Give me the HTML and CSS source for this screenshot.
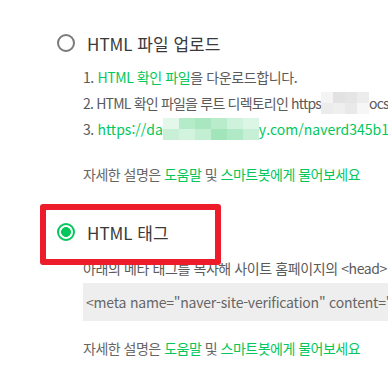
FILE: index.html
```html
<!DOCTYPE html>
<html lang="ko">
<head>
    <meta charset="UTF-8">
    <meta name="viewport" content="width=device-width, initial-scale=1.0">
    <title>사이트 소유확인</title>
    <link rel="stylesheet" href="styles.css">
</head>
<body>
    <div class="page">
        <div class="option">
            <span class="radio"></span>
            <span class="option-label">HTML 파일 업로드</span>
        </div>

        <ol class="steps">
            <li>1. <a class="link" href="#">HTML 확인 파일</a>을 다운로드합니다.</li>
            <li class="tight">2. HTML 확인 파일을 루트 디렉토리인 https<span class="mosaic grey"><i></i><i></i><i></i><i></i><i></i><i></i><i></i><i></i></span>ocs/</li>
            <li>3. <a class="link url" href="#">https://da<span class="mosaic green"><i></i><i></i><i></i><i></i><i></i><i></i><i></i><i></i><i></i><i></i><i></i><i></i></span>y.com/naverd345b19c.html</a></li>
        </ol>

        <p class="help">자세한 설명은 <a class="link" href="#">도움말</a> 및 <a class="link" href="#">스마트봇에게 물어보세요</a></p>

        <div class="option selected">
            <span class="radio on"></span>
            <span class="option-label">HTML 태그</span>
            <div class="highlight"></div>
        </div>

        <p class="desc">아래의 메타 태그를 복사해 사이트 홈페이지의 &lt;head&gt;섹션에 붙여넣어 주세요.</p>
        <div class="code">&lt;meta name="naver-site-verification" content="d345b19c" /&gt;</div>

        <p class="help help-last">자세한 설명은 <a class="link" href="#">도움말</a> 및 <a class="link" href="#">스마트봇에게 물어보세요</a></p>
    </div>
</body>
</html>
```

FILE: styles.css
```css
body {
    margin: 0;
    background: #ffffff;
    font-family: "Noto Sans CJK KR", "Noto Sans", sans-serif;
    color: #555;
}

.page {
    padding-top: 28px;
    height: 379px;
    box-sizing: border-box;
    overflow: hidden;
    white-space: nowrap;
}

.option {
    position: relative;
    display: flex;
    align-items: center;
    gap: 12px;
    height: 30px;
    padding-left: 57px;
}

.option.selected {
    margin-top: 30px;
}

.radio {
    box-sizing: border-box;
    width: 18px;
    height: 18px;
    border: 2px solid #7a7a7a;
    border-radius: 50%;
}

.radio.on {
    border: 2.5px solid #03c75a;
    background: radial-gradient(circle, #03c75a 0 4.6px, #fff 5.2px);
}

.option-label {
    font-size: 17px;
    color: #3a3a3a;
}

.highlight {
    position: absolute;
    left: 40px;
    top: -13px;
    width: 181px;
    height: 61px;
    box-sizing: border-box;
    border: 6px solid #ec1c2a;
    border-radius: 3px;
}

.steps {
    list-style: none;
    margin: 6px 0 0;
    padding: 0 0 0 83px;
    font-size: 14px;
    line-height: 26px;
    letter-spacing: -0.4px;
    color: #5a5a5a;
}

.steps .tight {
    letter-spacing: -0.8px;
}

.link {
    color: #03c75a;
    text-decoration: none;
}

.link.url {
    letter-spacing: 0;
}

.mosaic {
    display: inline-grid;
    vertical-align: middle;
    grid-auto-flow: column;
    grid-template-rows: 11px 11px;
    margin-top: -4px;
}

.mosaic i {
    display: block;
    width: 12px;
}

.mosaic.grey i:nth-child(1) { background: #f4f4f4; }
.mosaic.grey i:nth-child(2) { background: #ececec; }
.mosaic.grey i:nth-child(3) { background: #e2e2e2; }
.mosaic.grey i:nth-child(4) { background: #efefef; }
.mosaic.grey i:nth-child(5) { background: #e5e5e5; }
.mosaic.grey i:nth-child(6) { background: #e9e9e9; }
.mosaic.grey i:nth-child(7) { background: #ececec; }
.mosaic.grey i:nth-child(8) { background: #f6f6f6; }

.mosaic.green i { width: 16px; }
.mosaic.green i:nth-child(1) { background: #e3f7ea; }
.mosaic.green i:nth-child(2) { background: #c9f0d7; }
.mosaic.green i:nth-child(3) { background: #b4ebc8; }
.mosaic.green i:nth-child(4) { background: #d2f3de; }
.mosaic.green i:nth-child(5) { background: #a9e7c0; }
.mosaic.green i:nth-child(6) { background: #c2eed2; }
.mosaic.green i:nth-child(7) { background: #b8ecca; }
.mosaic.green i:nth-child(8) { background: #a3e5bb; }
.mosaic.green i:nth-child(9) { background: #cff2dc; }
.mosaic.green i:nth-child(10) { background: #b0e9c5; }
.mosaic.green i:nth-child(11) { background: #dcf6e6; }
.mosaic.green i:nth-child(12) { background: #c6efd5; }

.help {
    margin: 19px 0 0;
    padding-left: 83px;
    font-size: 14px;
    line-height: 26px;
    letter-spacing: -0.5px;
    color: #666;
}

.help-last {
    margin-top: 14px;
}

.desc {
    margin: 8px 0 0;
    padding-left: 83px;
    font-size: 14px;
    line-height: 26px;
    letter-spacing: -0.4px;
    color: #5a5a5a;
}

.code {
    margin: 2px 0 0 83px;
    padding: 0 3px;
    height: 38px;
    line-height: 38px;
    background: #eeeeee;
    font-size: 14px;
    letter-spacing: -0.2px;
    color: #666;
}
```
